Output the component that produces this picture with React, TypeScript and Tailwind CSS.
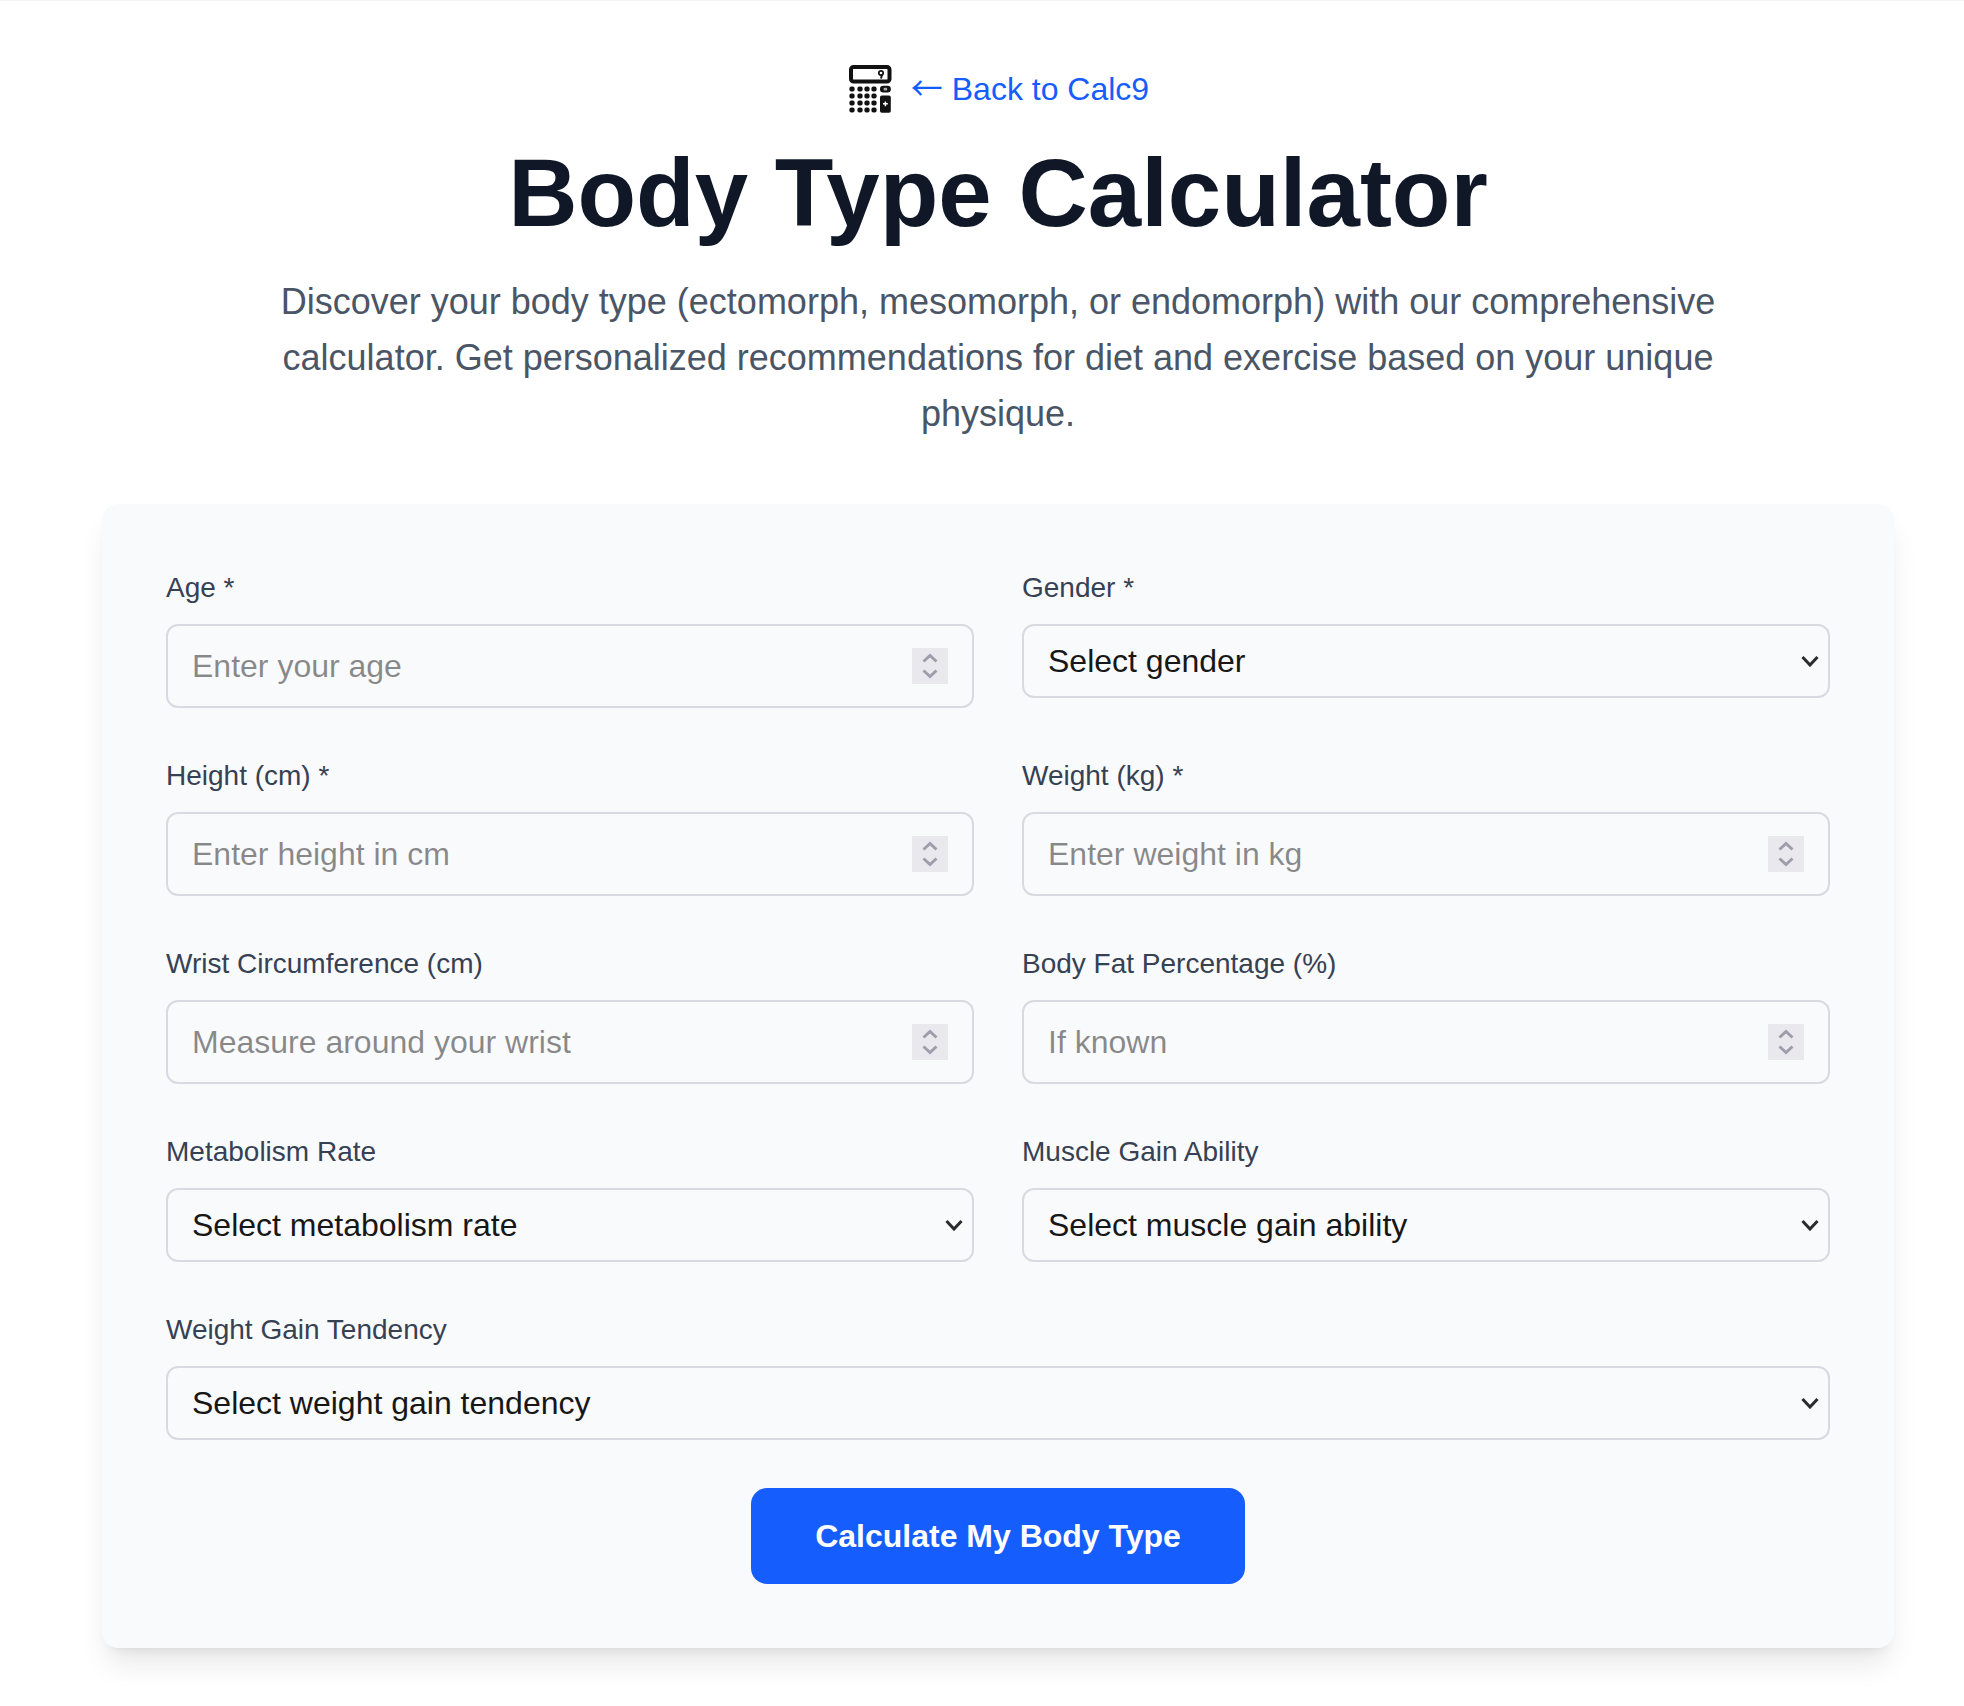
import React, { useId } from "react";

const control =
  "block w-full rounded-xl border-2 border-[#d8dae1] bg-transparent px-6 py-4 text-[32px] text-[#171717] outline-none focus:border-blue-600";

function CalculatorIcon() {
  const columns = [6, 14, 21, 28];
  const rows = [24, 31, 38, 45];
  return (
    <svg viewBox="1 0 48 48" className="size-12" aria-hidden="true">
      <rect x="5" y="2" width="38.5" height="14.5" rx="2.6" fill="#fff" stroke="#111" strokeWidth="4" />
      <circle cx="35" cy="8" r="2.2" fill="none" stroke="#111" strokeWidth="1.7" />
      <path d="M36 9.5 35 13.4" fill="none" stroke="#111" strokeWidth="1.9" />
      {rows.map((y) =>
        columns.map((x) => (
          <rect key={`${x}-${y}`} x={x - 2.6} y={y - 2.6} width="5.2" height="5.2" rx="2" fill="#111" />
        )),
      )}
      <rect x="34" y="20.8" width="10.8" height="6.6" rx="3.2" fill="#111" />
      <rect x="37.6" y="22.8" width="3.6" height="2.6" rx="1" fill="#aaa" />
      <rect x="34" y="30.4" width="10.8" height="17.4" rx="1.8" fill="#111" />
      <path d="M39.4 36.4v4.8M37 38.8h4.8" stroke="#fff" strokeWidth="1.5" />
    </svg>
  );
}

function Label({ id, children }: { id: string; children: React.ReactNode }) {
  return (
    <label htmlFor={id} className="mb-4 block text-[28px] leading-10 font-medium text-gray-700">
      {children}
    </label>
  );
}

function NumberField({ label, placeholder }: { label: string; placeholder: string }) {
  const id = useId();
  return (
    <div>
      <Label id={id}>{label}</Label>
      <div className="relative">
        <input
          id={id}
          type="number"
          placeholder={placeholder}
          className={`${control} leading-12 [appearance:textfield] [&::-webkit-inner-spin-button]:appearance-none`}
        />
        <svg
          viewBox="0 0 36 36"
          className="pointer-events-none absolute inset-y-0 right-[26px] my-auto size-9 bg-[#e9e8ed]"
          fill="none"
          stroke="#9f9dab"
          strokeWidth="3"
          aria-hidden="true"
        >
          <path d="m11.5 13.5 6.5-6 6.5 6M11.5 22.5l6.5 6 6.5-6" />
        </svg>
      </div>
    </div>
  );
}

function SelectField({
  label,
  placeholder,
  options,
  className,
}: {
  label: string;
  placeholder: string;
  options: string[];
  className?: string;
}) {
  const id = useId();
  return (
    <div className={className}>
      <Label id={id}>{label}</Label>
      <div className="relative">
        <select id={id} defaultValue="" className={`${control} appearance-none leading-[38px]`}>
          <option value="">{placeholder}</option>
          {options.map((option) => (
            <option key={option}>{option}</option>
          ))}
        </select>
        <svg
          viewBox="0 0 18 12"
          className="pointer-events-none absolute inset-y-0 right-[11px] my-auto h-3 w-[18px]"
          fill="none"
          stroke="#2b2b2b"
          strokeWidth="3"
          aria-hidden="true"
        >
          <path d="m1.5 2 7.5 8 7.5-8" />
        </svg>
      </div>
    </div>
  );
}

export default function App() {
  return (
    <div className="min-h-screen border-t border-gray-100 bg-white pb-14 pl-8 font-['Liberation_Sans',Arial,sans-serif]">
      <main className="mx-auto max-w-[1792px] pt-16">
        <header className="mb-[62px] text-center">
          <div className="mb-8 flex items-center justify-center gap-4">
            <CalculatorIcon />
            <a href="#" className="text-[32px] leading-12 text-blue-600 hover:underline">
              <span className="font-['Noto_Sans_CJK_JP',sans-serif] leading-none">←</span> Back to Calc9
            </a>
          </div>
          <h1 className="mb-[33px] text-8xl leading-none font-bold text-gray-900">Body Type Calculator</h1>
          <p className="mx-auto max-w-[1536px] text-4xl leading-14 text-gray-600">
            Discover your body type (ectomorph, mesomorph, or endomorph) with our comprehensive calculator. Get
            personalized recommendations for diet and exercise based on your unique physique.
          </p>
        </header>

        <form
          onSubmit={(event) => event.preventDefault()}
          className="rounded-2xl bg-[#f9fafc] p-16 shadow-[0_20px_30px_-6px_rgb(0_0_0/0.1),0_8px_12px_-8px_rgb(0_0_0/0.1)]"
        >
          <div className="grid grid-cols-2 gap-12">
            <NumberField label="Age *" placeholder="Enter your age" />
            <SelectField label="Gender *" placeholder="Select gender" options={["Male", "Female"]} />
            <NumberField label="Height (cm) *" placeholder="Enter height in cm" />
            <NumberField label="Weight (kg) *" placeholder="Enter weight in kg" />
            <NumberField label="Wrist Circumference (cm)" placeholder="Measure around your wrist" />
            <NumberField label="Body Fat Percentage (%)" placeholder="If known" />
            <SelectField
              label="Metabolism Rate"
              placeholder="Select metabolism rate"
              options={["Fast", "Moderate", "Slow"]}
            />
            <SelectField
              label="Muscle Gain Ability"
              placeholder="Select muscle gain ability"
              options={["Easy", "Moderate", "Difficult"]}
            />
            <SelectField
              label="Weight Gain Tendency"
              placeholder="Select weight gain tendency"
              options={["Low", "Moderate", "High"]}
              className="col-span-2"
            />
          </div>
          <div className="mt-12 text-center">
            <button
              type="submit"
              className="rounded-2xl bg-blue-600 px-16 py-6 text-[32px] leading-12 font-semibold text-white hover:bg-blue-700"
            >
              Calculate My Body Type
            </button>
          </div>
        </form>
      </main>
    </div>
  );
}
